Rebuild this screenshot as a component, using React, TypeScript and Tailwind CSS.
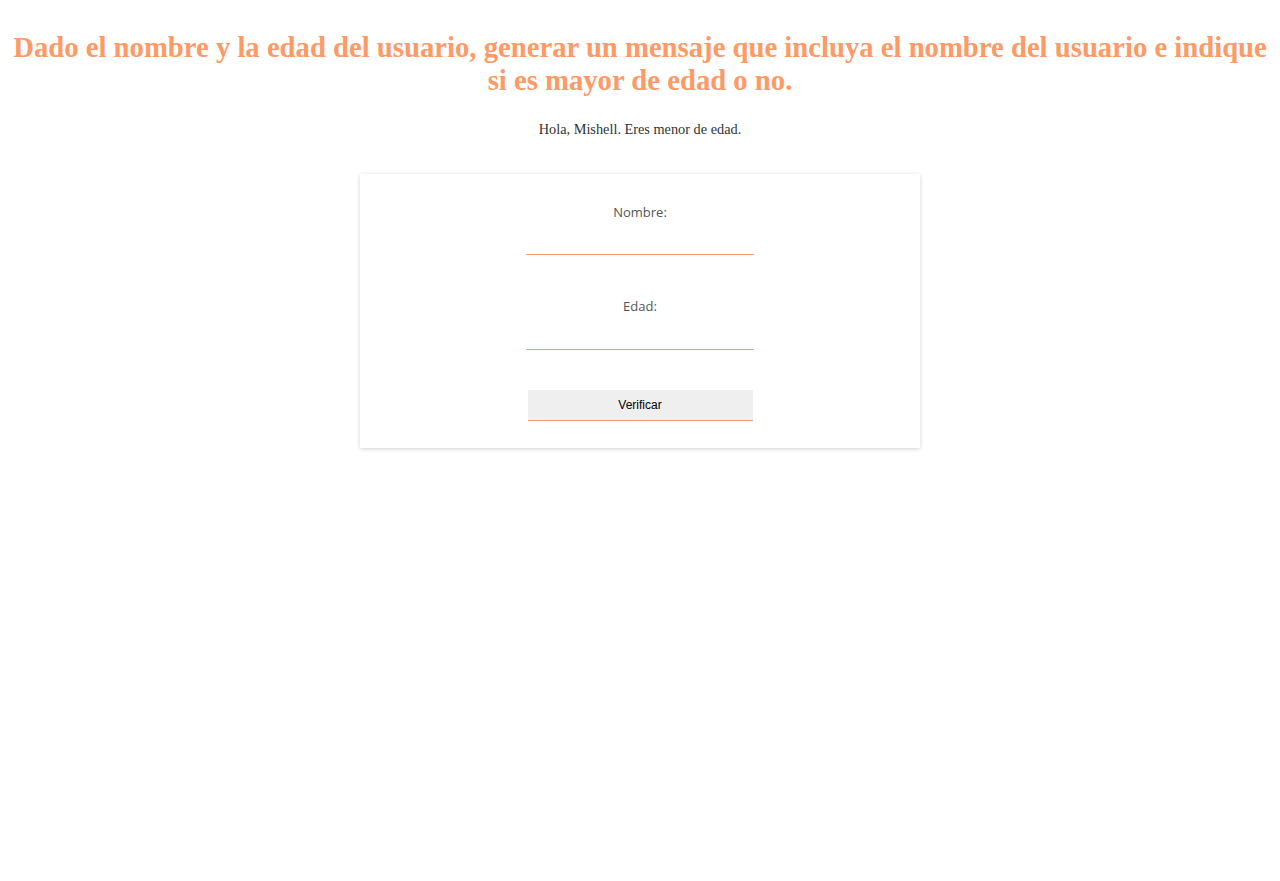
import React from "react";

export default function App() {
  return (
    <div className="min-h-[881px] bg-white" style={{ fontFamily: '"Liberation Serif", serif' }}>
      <h1 className="pt-[31px] px-2 text-center text-[28.7px] leading-[33px] font-bold text-[#ff9966]">
        Dado el nombre y la edad del usuario, generar un mensaje que incluya el nombre del usuario e indique si es mayor de edad o no.
      </h1>
      <p className="mt-[24px] text-center text-[14.3px] leading-[16px] text-[#333333]">
        Hola, Mishell. Eres menor de edad.
      </p>
      <div className="mx-auto mt-[37px] w-[560px] bg-white shadow-[0_1px_4px_rgba(0,0,0,0.18)] pt-[29px] pb-[27px] flex flex-col items-center" style={{ fontFamily: '"Open Sans", "Noto Sans", sans-serif' }}>
        <label className="text-[13px] leading-[18px] text-[#555555]">Nombre:</label>
        <input className="mt-[10px] w-[228px] h-[24px] border-b border-[#ff9966] outline-none bg-transparent" />
        <label className="mt-[42px] text-[13px] leading-[18px] text-[#555555]">Edad:</label>
        <input className="mt-[11px] w-[228px] h-[24px] border-b border-[#ff9966] outline-none bg-transparent" />
        <button className="mt-[40px] w-[225px] h-[31px] bg-[#efefef] border-0 border-b border-solid border-[#ff9966] text-[12px] text-black" style={{ fontFamily: '"Liberation Sans", Arial, sans-serif' }}>
          Verificar
        </button>
      </div>
    </div>
  );
}
